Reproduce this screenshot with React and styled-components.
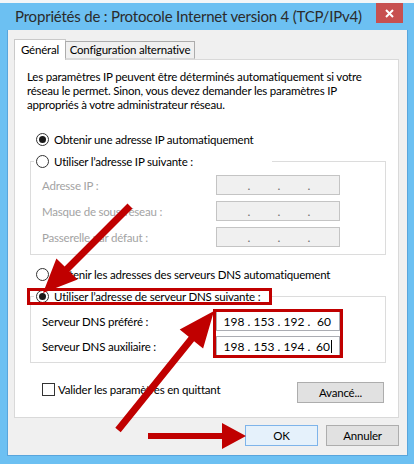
import React from "react"
import styled, { createGlobalStyle } from "styled-components"

const font = `Lato, "Noto Sans", sans-serif`
const red = "#c00000"

const GlobalStyle = createGlobalStyle`
  html, body { margin: 0; padding: 0; }
  body {
    width: 414px;
    height: 464px;
    overflow: hidden;
    background: #f4f6f8;
    font-family: ${font};
  }
  * { box-sizing: border-box; }
`

const Screen = styled.div`
  position: relative;
  width: 414px;
  height: 464px;
  padding-top: 3px;
  background: #f4f6f8;
`

const Window = styled.div`
  width: 414px;
  height: 461px;
  background: #6cc0f2;
  display: flex;
  flex-direction: column;
`

const TitleBar = styled.div`
  height: 27px;
  flex-shrink: 0;
  display: flex;
  justify-content: space-between;
  padding: 0 11px 0 15px;
`

const Title = styled.div`
  font-size: 15px;
  line-height: 27px;
  color: #2b2b2b;
  letter-spacing: -0.2px;
  white-space: nowrap;
`

const CloseButton = styled.div`
  width: 27px;
  height: 20px;
  background: #c75050;
  display: flex;
  align-items: center;
  justify-content: center;
`

const Client = styled.div`
  flex: 1;
  margin: 0 6px 8px 7px;
  background: #f0f0f0;
  border: 1px solid #58a5dc;
  border-top: none;
  padding: 9px 8px 0 6px;
  display: flex;
  flex-direction: column;
  font-size: 11.5px;
  letter-spacing: -0.2px;
  color: #000;
`

const TabBar = styled.div`
  display: flex;
  align-items: flex-end;
  height: 21px;
  position: relative;
  z-index: 1;
`

const Tab = styled.div`
  width: ${(p) => (p.$active ? "52px" : "130px")};
  height: ${(p) => (p.$active ? "21px" : "18px")};
  margin-left: ${(p) => (p.$active ? "0" : "-1px")};
  margin-bottom: ${(p) => (p.$active ? "0" : "1px")};
  border: 1px solid ${(p) => (p.$active ? "#c9c9c9" : "#acacac")};
  border-bottom: ${(p) => (p.$active ? "none" : "1px solid #d9d9d9")};
  background: ${(p) => (p.$active ? "#fff" : "#f0f0f0")};
  line-height: ${(p) => (p.$active ? "19px" : "16px")};
  text-align: center;
  white-space: nowrap;
`

const Panel = styled.div`
  margin-top: -1px;
  background: #fff;
  border: 1px solid #d9d9d9;
  padding: 10px 12px 14px 12px;
  display: flex;
  flex-direction: column;
`

const Intro = styled.p`
  margin: 0;
  line-height: 14px;
  white-space: nowrap;
`

const RadioRow = styled.label`
  display: flex;
  align-items: center;
  gap: 5px;
  height: 15px;
  line-height: 15px;
  white-space: nowrap;
  padding-left: ${(p) => p.$indent ?? 9}px;
  margin-top: ${(p) => p.$top ?? 0}px;
`

const Radio = styled.span`
  width: 13px;
  height: 13px;
  flex-shrink: 0;
  border-radius: 50%;
  border: 1px solid #333;
  background: #fff;
  display: inline-flex;
  align-items: center;
  justify-content: center;

  &::after {
    content: "";
    width: 7px;
    height: 7px;
    border-radius: 50%;
    background: ${(p) => (p.$checked ? "#1a1a1a" : "transparent")};
  }
`

const Group = styled.fieldset`
  margin: ${(p) => p.$top}px 0 0 3px;
  padding: 0;
  min-width: 0;
  border: 1px solid #dcdcdc;
`

const Legend = styled.legend`
  width: 238px;
  margin-left: 3px;
  padding: 0;
`

const Fields = styled.div`
  display: grid;
  row-gap: ${(p) => p.$gap}px;
  padding: ${(p) => p.$top}px 0 ${(p) => p.$bottom}px 11px;
`

const FieldRow = styled.div`
  display: grid;
  grid-template-columns: 174px 124px;
  align-items: center;
`

const FieldLabel = styled.span`
  color: ${(p) => (p.$disabled ? "#a3a3a3" : "#000")};
  white-space: nowrap;
`

const IpBox = styled.div`
  width: 124px;
  height: 20px;
  border: 1px solid ${(p) => (p.$disabled ? "#c4c4c4" : "#abadb3")};
  background: ${(p) => (p.$disabled ? "#f0f0f0" : "#fff")};
  color: ${(p) => (p.$disabled ? "#6d6d6d" : "#000")};
  display: flex;
  align-items: center;
  padding-left: 4px;
  font-size: 12px;
  letter-spacing: 0;
`

const Octet = styled.span`
  width: 26px;
  text-align: center;
  white-space: nowrap;
`

const Dot = styled.span`
  width: 4px;
  text-align: center;
`

const Caret = styled.span`
  display: inline-block;
  width: 1px;
  height: 13px;
  margin-left: 1px;
  background: #000;
  vertical-align: -2px;
`

const BottomRow = styled.div`
  display: flex;
  align-items: flex-start;
  justify-content: space-between;
  margin-top: 19px;
  padding-left: 15px;
`

const CheckRow = styled.label`
  display: flex;
  align-items: center;
  gap: 3px;
  height: 15px;
  line-height: 15px;
  white-space: nowrap;
`

const Checkbox = styled.span`
  width: 13px;
  height: 13px;
  border: 1px solid #333;
  background: #fff;
  flex-shrink: 0;
`

const Button = styled.button`
  width: ${(p) => p.$w}px;
  height: 21px;
  padding: 0;
  margin-right: ${(p) => p.$right ?? 0}px;
  font-family: ${font};
  font-size: 11.5px;
  letter-spacing: -0.2px;
  color: #000;
  background: ${(p) => (p.$primary ? "#e5f1fb" : "#e1e1e1")};
  border: 1px solid ${(p) => (p.$primary ? "#7eb4ea" : "#adadad")};
`

const Footer = styled.div`
  display: flex;
  justify-content: flex-end;
  gap: 8px;
  margin-top: 7px;
`

const Overlay = styled.svg`
  position: absolute;
  top: 0;
  left: 0;
  pointer-events: none;
`

const arrowPoints = (sx, sy, tx, ty, w, len, half) => {
  const d = Math.hypot(tx - sx, ty - sy)
  const ux = (tx - sx) / d
  const uy = (ty - sy) / d
  const nx = -uy
  const ny = ux
  const bx = tx - ux * len
  const by = ty - uy * len
  return [
    [sx + (nx * w) / 2, sy + (ny * w) / 2],
    [bx + (nx * w) / 2, by + (ny * w) / 2],
    [bx + nx * half, by + ny * half],
    [tx, ty],
    [bx - nx * half, by - ny * half],
    [bx - (nx * w) / 2, by - (ny * w) / 2],
    [sx - (nx * w) / 2, sy - (ny * w) / 2],
  ]
    .map((p) => p.map((v) => v.toFixed(1)).join(","))
    .join(" ")
}

const IpField = ({ value, disabled, caret }) => {
  const parts = value || ["", "", "", ""]
  return (
    <IpBox $disabled={disabled}>
      {parts.map((part, i) => (
        <React.Fragment key={i}>
          <Octet>
            {part}
            {caret && i === 3 && <Caret />}
          </Octet>
          {i < 3 && <Dot>.</Dot>}
        </React.Fragment>
      ))}
    </IpBox>
  )
}

export default function App() {
  return (
    <Screen>
      <GlobalStyle />
      <Window>
        <TitleBar>
          <Title>Propriétés de : Protocole Internet version 4 (TCP/IPv4)</Title>
          <CloseButton>
            <svg width="9" height="9" viewBox="0 0 9 9">
              <path d="M1 1L8 8M8 1L1 8" stroke="#fff" strokeWidth="2" />
            </svg>
          </CloseButton>
        </TitleBar>
        <Client>
          <TabBar>
            <Tab $active>Général</Tab>
            <Tab>Configuration alternative</Tab>
          </TabBar>
          <Panel>
            <Intro>
              Les paramètres IP peuvent être déterminés automatiquement si votre
              <br />
              réseau le permet. Sinon, vous devez demander les paramètres IP
              <br />
              appropriés à votre administrateur réseau.
            </Intro>

            <RadioRow $top={20}>
              <Radio $checked />
              Obtenir une adresse IP automatiquement
            </RadioRow>

            <Group $top={7}>
              <Legend>
                <RadioRow $indent={2}>
                  <Radio />
                  Utiliser l’adresse IP suivante :
                </RadioRow>
              </Legend>
              <Fields $top={6} $bottom={7} $gap={6}>
                <FieldRow>
                  <FieldLabel $disabled>Adresse IP :</FieldLabel>
                  <IpField disabled />
                </FieldRow>
                <FieldRow>
                  <FieldLabel $disabled>Masque de sous-réseau :</FieldLabel>
                  <IpField disabled />
                </FieldRow>
                <FieldRow>
                  <FieldLabel $disabled>Passerelle par défaut :</FieldLabel>
                  <IpField disabled />
                </FieldRow>
              </Fields>
            </Group>

            <RadioRow $top={12}>
              <Radio />
              Obtenir les adresses des serveurs DNS automatiquement
            </RadioRow>

            <Group $top={7}>
              <Legend>
                <RadioRow $indent={2}>
                  <Radio $checked />
                  Utiliser l’adresse de serveur DNS suivante :
                </RadioRow>
              </Legend>
              <Fields $top={7} $bottom={6} $gap={5}>
                <FieldRow>
                  <FieldLabel>Serveur DNS préféré :</FieldLabel>
                  <IpField value={["198", "153", "192", "60"]} />
                </FieldRow>
                <FieldRow>
                  <FieldLabel>Serveur DNS auxiliaire :</FieldLabel>
                  <IpField value={["198", "153", "194", "60"]} caret />
                </FieldRow>
              </Fields>
            </Group>

            <BottomRow>
              <CheckRow>
                <Checkbox />
                Valider les paramètres en quittant
              </CheckRow>
              <Button $w={87} $right={2}>Avancé...</Button>
            </BottomRow>
          </Panel>
          <Footer>
            <Button $w={73} $primary>OK</Button>
            <Button $w={73}>Annuler</Button>
          </Footer>
        </Client>
      </Window>

      <Overlay width="414" height="464" viewBox="0 0 414 464">
        <rect x="28.5" y="289.5" width="242" height="14" fill="none" stroke={red} strokeWidth="3" />
        <rect x="214.5" y="310.5" width="127" height="46" fill="none" stroke={red} strokeWidth="3" />
        <polygon points={arrowPoints(130, 206, 43, 293, 7, 34, 15)} fill={red} />
        <polygon points={arrowPoints(118, 430, 214, 311, 7, 36, 15)} fill={red} />
        <polygon points={arrowPoints(148, 436, 246, 436, 6, 24, 13)} fill={red} />
      </Overlay>
    </Screen>
  )
}
